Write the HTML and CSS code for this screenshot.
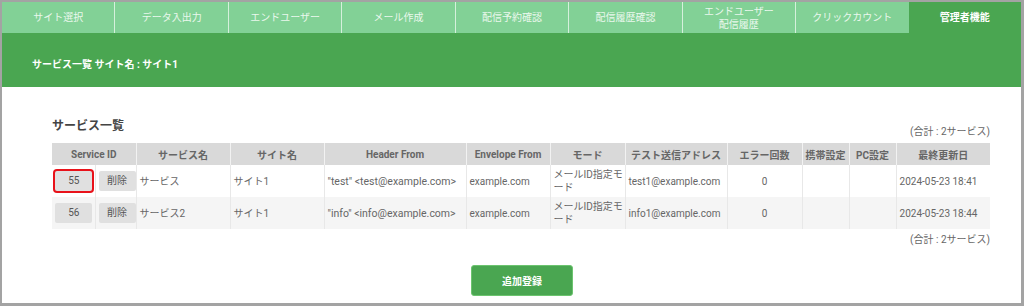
FILE: index.html
```html
<!DOCTYPE html>
<html lang="ja">
<head>
<meta charset="utf-8">
<title>サービス一覧</title>
<link rel="stylesheet" href="styles.css">
</head>
<body>
<div class="frame">
  <nav class="tabs">
    <div class="tab">サイト選択</div>
    <div class="tab">データ入出力</div>
    <div class="tab">エンドユーザー</div>
    <div class="tab">メール作成</div>
    <div class="tab">配信予約確認</div>
    <div class="tab">配信履歴確認</div>
    <div class="tab two">エンドユーザー<br>配信履歴</div>
    <div class="tab">クリックカウント</div>
    <div class="tab active">管理者機能</div>
  </nav>
  <div class="bar">サービス一覧 サイト名 : サイト1</div>
  <main class="content">
    <h2 class="heading">サービス一覧</h2>
    <div class="total top">(合計 : 2サービス)</div>
    <table class="list">
      <colgroup>
        <col class="c-id"><col class="c-del"><col class="c-name"><col class="c-site"><col class="c-hf"><col class="c-ef"><col class="c-mode"><col class="c-test"><col class="c-err"><col class="c-mob"><col class="c-pc"><col class="c-date">
      </colgroup>
      <thead>
        <tr>
          <th colspan="2">Service ID</th>
          <th>サービス名</th>
          <th>サイト名</th>
          <th>Header From</th>
          <th>Envelope From</th>
          <th>モード</th>
          <th>テスト送信アドレス</th>
          <th>エラー回数</th>
          <th>携帯設定</th>
          <th>PC設定</th>
          <th>最終更新日</th>
        </tr>
      </thead>
      <tbody>
        <tr>
          <td class="btn-cell"><span class="sbtn id marked">55</span></td>
          <td class="btn-cell"><span class="sbtn del">削除</span></td>
          <td>サービス</td>
          <td>サイト1</td>
          <td class="nw latin">"test" &lt;test@example.com&gt;</td>
          <td>example.com</td>
          <td class="mode">メールID指定モード</td>
          <td class="nw">test1@example.com</td>
          <td class="center">0</td>
          <td></td>
          <td></td>
          <td class="nw">2024-05-23 18:41</td>
        </tr>
        <tr class="alt">
          <td class="btn-cell"><span class="sbtn id">56</span></td>
          <td class="btn-cell"><span class="sbtn del">削除</span></td>
          <td>サービス2</td>
          <td>サイト1</td>
          <td class="nw latin">"info" &lt;info@example.com&gt;</td>
          <td>example.com</td>
          <td class="mode">メールID指定モード</td>
          <td class="nw">info1@example.com</td>
          <td class="center">0</td>
          <td></td>
          <td></td>
          <td class="nw">2024-05-23 18:44</td>
        </tr>
      </tbody>
    </table>
    <div class="total bottom">(合計 : 2サービス)</div>
    <div class="actions"><button class="add">追加登録</button></div>
  </main>
</div>
</body>
</html>
```

FILE: styles.css
```css
* { box-sizing: border-box; }
html, body { margin: 0; padding: 0; background: #fff; }
body {
  font-family: "Roboto", "Noto Sans CJK JP", sans-serif;
  font-size: 10px;
  color: #666;
}
.frame {
  width: 1024px;
  height: 306px;
  border-style: solid;
  border-color: #a3a3a3;
  border-width: 2px 3px 3px 2px;
  display: flex;
  flex-direction: column;
  overflow: hidden;
}
.tabs {
  display: flex;
  height: 31px;
  background: #82d196;
}
.tab {
  flex: 1 1 0;
  display: flex;
  align-items: center;
  justify-content: center;
  text-align: center;
  color: #eaf8ed;
  font-size: 10px;
  line-height: 13px;
  border-left: 1px solid #d6f0dc;
}
.tab:first-child { border-left: none; }
.tab.active {
  background: #4aa651;
  color: #fff;
  font-weight: bold;
  border-left: none;
}
.bar {
  height: 54px;
  background: #4aa651;
  color: #fff;
  font-weight: bold;
  display: flex;
  align-items: center;
  padding: 6px 0 0 30px;
  font-size: 10px;
}
.content {
  padding: 31px 31px 0 50px;
  display: flex;
  flex-direction: column;
}
.heading {
  margin: 0;
  font-size: 12px;
  font-weight: bold;
  color: #444;
  line-height: 16px;
}
.total {
  text-align: right;
  line-height: 14px;
}
.total.top { margin-top: -9px; margin-bottom: 4px; }
.total.bottom { margin-top: 4px; }
.list {
  width: 938px;
  border-collapse: collapse;
  table-layout: fixed;
}
.c-id { width: 43px; }
.c-del { width: 41px; }
.c-name { width: 94px; }
.c-site { width: 94px; }
.c-hf { width: 142px; }
.c-ef { width: 84px; }
.c-mode { width: 75px; }
.c-test { width: 102px; }
.c-err { width: 75px; }
.c-mob { width: 47px; }
.c-pc { width: 47px; }
.c-date { width: 94px; }
.list th {
  background: #d9d9d9;
  height: 22px;
  font-weight: bold;
  color: #666;
  text-align: center;
  padding: 0 2px;
  border-left: 1px solid #f2f2f2;
  white-space: nowrap;
}
.list th:first-child { border-left: none; }
.list td {
  height: 32px;
  padding: 0 3px;
  border-left: 1px solid #e8e8e8;
  line-height: 13px;
  vertical-align: middle;
}
.list td.nw { white-space: nowrap; }
.list td.latin { font-size: 10.5px; }
.list td.mode { line-break: anywhere; word-break: break-all; padding: 0 0 0 3px; }
.list td:first-child { border-left: none; }
.list tr.alt td { background: #f5f5f5; }
.list td.center { text-align: center; }
.list td.btn-cell { padding: 0 2px 0 3px; text-align: center; }
.sbtn {
  display: inline-block;
  width: 37px;
  height: 20px;
  line-height: 20px;
  background: #e0e0e0;
  border-radius: 2px;
  text-align: center;
  color: #555;
}
.sbtn.marked {
  box-shadow: 0 0 0 2px #e8121a;
}
.actions {
  padding-left: 419px;
  margin-top: 18px;
}
.add {
  width: 102px;
  height: 31px;
  background: #4aa651;
  border: 1px solid #6cc46f;
  border-radius: 3px;
  color: #fff;
  font-family: "Noto Sans CJK JP", sans-serif;
  font-weight: bold;
  font-size: 10px;
  padding: 0;
}
```
